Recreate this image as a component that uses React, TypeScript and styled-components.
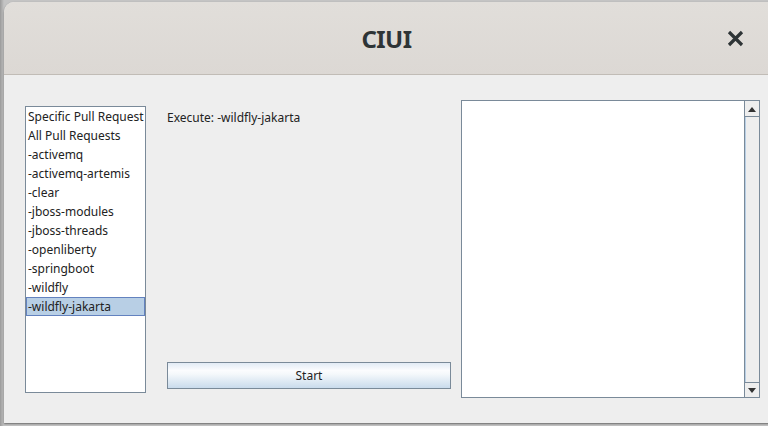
import React from "react";
import styled, { createGlobalStyle } from "styled-components";

const Global = createGlobalStyle`
  html, body { margin: 0; padding: 0; }
  body {
    width: 768px;
    height: 426px;
    overflow: hidden;
    background: linear-gradient(to right, #9a9a9a 0px, #c4c4c4 4px);
    font-family: "Noto Sans", "Open Sans", sans-serif;
  }
`;

const Window = styled.div`
  margin: 2px 0 0 4px;
  width: 775px;
  height: 421px;
  border-radius: 10px 10px 0 0;
  background: #eeeeee;
  box-shadow: 0 1px 2px rgba(0, 0, 0, 0.45);
  display: flex;
  flex-direction: column;
  overflow: hidden;
`;

const TitleBar = styled.div`
  height: 72px;
  flex: none;
  background: linear-gradient(to bottom, #e1deda, #dcd8d4);
  border-bottom: 1px solid #c1bcb6;
  display: grid;
  grid-template-columns: 1fr auto 1fr;
  align-items: center;
`;

const Title = styled.div`
  grid-column: 2;
  font-family: "Noto Sans", sans-serif;
  font-weight: 700;
  font-size: 24px;
  color: #2e3436;
  letter-spacing: -0.5px;
  margin-left: -10px;
`;

const CloseButton = styled.div`
  grid-column: 3;
  justify-self: end;
  margin-right: 34px;
  width: 20px;
  height: 20px;
  display: flex;
  align-items: center;
  justify-content: center;
`;

const Content = styled.div`
  flex: 1;
  display: grid;
  grid-template-columns: 121px 284px 299px;
  column-gap: 21px;
  padding-left: 21px;
  align-items: start;
`;

const List = styled.div`
  margin-top: 31px;
  height: 285px;
  background: #ffffff;
  border: 1px solid #7a8a99;
  display: flex;
  flex-direction: column;
`;

const Item = styled.div<{ $selected?: boolean }>`
  height: 19px;
  line-height: 18px;
  font-size: 12px;
  color: #222;
  padding-left: 1px;
  white-space: nowrap;
  box-sizing: border-box;
  background: ${(p) => (p.$selected ? "#b8cfe5" : "transparent")};
  border: 1px solid ${(p) => (p.$selected ? "#6382bf" : "transparent")};
  margin: 0;
`;

const Middle = styled.div`
  height: 314px;
  display: flex;
  flex-direction: column;
  justify-content: space-between;
  padding-top: 35px;
  box-sizing: border-box;
`;

const ExecLabel = styled.div`
  font-size: 12px;
  color: #222;
  line-height: 16px;
`;

const StartButton = styled.button`
  width: 284px;
  height: 27px;
  border: 1px solid #7a8a99;
  background: linear-gradient(
    to bottom,
    #e2ebf5 0%,
    #fbfcfe 30%,
    #f4f8fb 45%,
    #c9dbec 100%
  );
  font-family: "Noto Sans", sans-serif;
  font-size: 12px;
  color: #222;
  padding: 0;
  margin-bottom: 0;
`;

const OutputBox = styled.div`
  margin-top: 25px;
  margin-left: -11px;
  height: 296px;
  width: 297px;
  background: #ffffff;
  border: 1px solid #7a8a99;
  display: flex;
`;

const OutputText = styled.div`
  flex: 1;
`;

const ScrollBar = styled.div`
  width: 14px;
  border-left: 1px solid #7a8a99;
  background: #eeeeee;
  display: flex;
  flex-direction: column;
`;

const ArrowButton = styled.div<{ $down?: boolean }>`
  height: 14px;
  flex: none;
  display: flex;
  align-items: center;
  justify-content: center;
  background: #eeeeee;
  border-${(p) => (p.$down ? "top" : "bottom")}: 1px solid #7a8a99;
  margin-top: ${(p) => (p.$down ? "0" : "1px")};
`;

const Track = styled.div`
  flex: 1;
  border-left: 1px solid #b8cfe5;
`;

const items = [
  "Specific Pull Request",
  "All Pull Requests",
  "-activemq",
  "-activemq-artemis",
  "-clear",
  "-jboss-modules",
  "-jboss-threads",
  "-openliberty",
  "-springboot",
  "-wildfly",
  "-wildfly-jakarta",
];

export default function App() {
  return (
    <>
      <Global />
      <Window>
        <TitleBar>
          <Title>CIUI</Title>
          <CloseButton>
            <svg width="17" height="17" viewBox="0 0 17 17">
              <path
                d="M2 2 L15 15 M15 2 L2 15"
                stroke="#2e3436"
                strokeWidth="3.2"
                strokeLinecap="butt"
              />
            </svg>
          </CloseButton>
        </TitleBar>
        <Content>
          <List>
            {items.map((it) => (
              <Item key={it} $selected={it === "-wildfly-jakarta"}>
                {it}
              </Item>
            ))}
          </List>
          <Middle>
            <ExecLabel>Execute: -wildfly-jakarta</ExecLabel>
            <StartButton>Start</StartButton>
          </Middle>
          <OutputBox>
            <OutputText />
            <ScrollBar>
              <ArrowButton>
                <svg width="8" height="5" viewBox="0 0 8 5">
                  <path d="M0 5 L4 0 L8 5 Z" fill="#333" />
                </svg>
              </ArrowButton>
              <Track />
              <ArrowButton $down>
                <svg width="8" height="5" viewBox="0 0 8 5">
                  <path d="M0 0 L8 0 L4 5 Z" fill="#333" />
                </svg>
              </ArrowButton>
            </ScrollBar>
          </OutputBox>
        </Content>
      </Window>
    </>
  );
}
